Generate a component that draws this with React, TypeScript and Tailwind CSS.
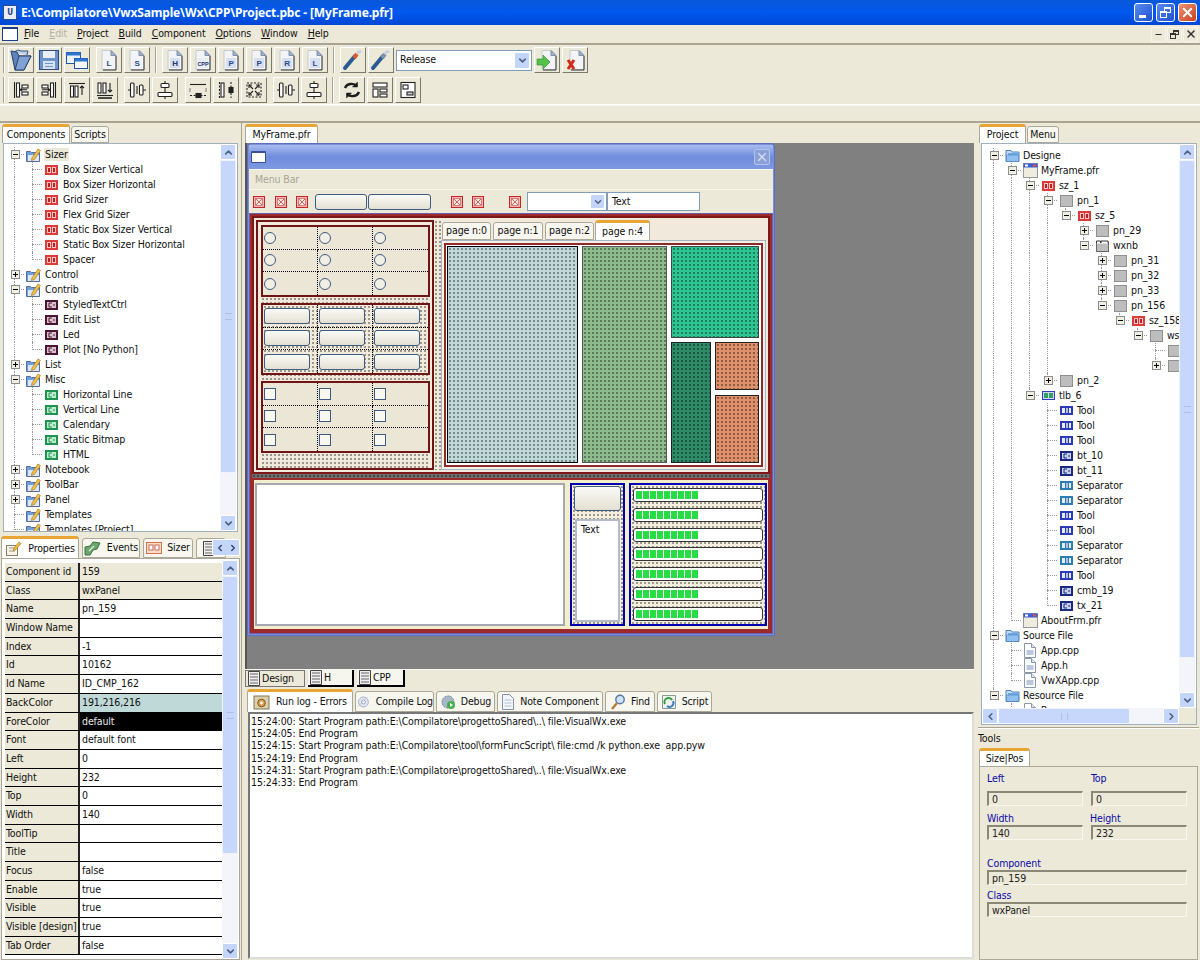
import React from "react";
import { ChevronUp, ChevronDown, ChevronLeft, ChevronRight, Minus, X } from "lucide-react";

const DOTS = "bg-[radial-gradient(circle,rgba(0,0,0,0.36)_0.75px,transparent_0.85px)] bg-[length:4px_4px]";
const BEV = "border border-t-white border-l-white border-r-[#7d7968] border-b-[#7d7968]";

/* ---------- toolbar icons ---------- */
const Doc = ({ l, c = "#2a4a90", sz = 8, tint = "#d5dff0" }: { l: string; c?: string; sz?: number; tint?: string }) => (
  <svg width="20" height="22" viewBox="0 0 20 22">
    <path d="M3 1.5h9l5 5v14H3z" fill="#f3f4f5" stroke="#c5c9cf" />
    <path d="M12 1.5v5h5z" fill="#9fb4cf" stroke="#7d8ea8" />
    <rect x="5" y="9" width="10" height="10" fill={tint} />
    <text x="10" y="17" textAnchor="middle" fontSize={sz} fontWeight="700" fontFamily="Liberation Sans" fill={c}>{l}</text>
    <path d="M17 7v14H4" fill="none" stroke="#333" />
  </svg>
);
const OpenFolder = () => (
  <svg width="24" height="24" viewBox="0 0 24 24">
    <path d="M5 4l4-2 3 1h7l-1 4" fill="#bcd0ea" stroke="#34527c" />
    <path d="M2 3l6 1 2 4h12l-7 14H6z" fill="#5f83b8" stroke="#26426c" />
    <path d="M10 8h12l-7 14H6z" fill="#7fa2d2" stroke="#26426c" />
  </svg>
);
const Floppy = () => (
  <svg width="22" height="22" viewBox="0 0 22 22">
    <rect x="1.5" y="1.5" width="19" height="19" fill="#6c93c9" stroke="#2d4d80" />
    <rect x="5" y="2" width="12" height="7" fill="#e9f0f9" />
    <rect x="5" y="12" width="12" height="8" fill="#d7e2f1" />
    <rect x="7" y="14" width="8" height="1" fill="#6c93c9" />
    <rect x="7" y="17" width="8" height="1" fill="#6c93c9" />
  </svg>
);
const Windows = () => (
  <svg width="24" height="22" viewBox="0 0 24 22">
    <rect x="1.5" y="3.5" width="14" height="11" fill="#eef3fa" stroke="#1f57a8" />
    <rect x="1.5" y="3.5" width="14" height="3" fill="#2e74d0" />
    <rect x="9.5" y="9.5" width="13" height="10" fill="#f7f9fc" stroke="#1f57a8" />
    <rect x="9.5" y="9.5" width="13" height="3" fill="#2e74d0" />
  </svg>
);
const G = ({ children }: { children: React.ReactNode }) => (
  <svg width="20" height="20" viewBox="0 0 20 20" fill="none" stroke="#222" strokeWidth="1.1">{children}</svg>
);
const AlignL = () => <G><path d="M3.5 2v16" /><rect x="5.5" y="3" width="3" height="14" fill="#fff" /><rect x="11" y="5" width="6" height="3" fill="#fff" /><rect x="11" y="12" width="6" height="3" fill="#fff" /><path d="M9 9.8h7M11 8.5l-2 1.3 2 1.3" /></G>;
const AlignR = () => <G><path d="M16.5 2v16" /><rect x="11.5" y="3" width="3" height="14" fill="#fff" /><rect x="3" y="5" width="6" height="3" fill="#fff" /><rect x="3" y="12" width="6" height="3" fill="#fff" /><path d="M3 9.8h8M9 8.5l2 1.3-2 1.3" /></G>;
const AlignT = () => <G><path d="M2 3.5h16" /><rect x="3.5" y="6" width="3" height="11" fill="#fff" /><rect x="8" y="6" width="3" height="11" fill="#fff" /><path d="M15 15V6M13 8l2-2 2 2" /></G>;
const AlignB = () => <G><path d="M2 15.5h16" /><rect x="3" y="3" width="3" height="10" fill="#fff" /><rect x="8" y="3" width="3" height="10" fill="#fff" /><path d="M15 3v9M13 10l2 2 2-2" /><path d="M3 18h14" strokeWidth="1.6" /></G>;
const CenterH = () => <G><path d="M10 6v8M1 10h3M16 10h3" /><rect x="3.5" y="3" width="3.5" height="14" rx="1" fill="#fff" /><rect x="12.5" y="5" width="3.5" height="10" rx="1" fill="#fff" /></G>;
const CenterV = () => <G><path d="M10 1v3M10 7v6M10 16v3" /><rect x="6" y="3.5" width="8" height="4" rx="1" fill="#fff" /><rect x="3" y="12.5" width="14" height="4" rx="1" fill="#fff" /></G>;
const SpaceV = () => <G><path d="M2 4.5h16" /><path d="M2 15.5h16" strokeDasharray="2 1.5" /><path d="M2 8.5v3M18 8.5v3" strokeDasharray="1 1" /><rect x="8" y="13.5" width="5" height="4" fill="#222" /></G>;
const SpaceH = () => <G><path d="M3.5 2v16" strokeDasharray="2 1.5" /><rect x="5" y="3" width="3" height="14" fill="#fff" /><path d="M15 2v5M15 13v5" strokeDasharray="2 1.5" /><rect x="13" y="7.5" width="4" height="5" fill="#222" /></G>;
const Expand = () => <G><rect x="3" y="3" width="14" height="14" strokeDasharray="2 1.5" /><path d="M5 5l4 4M15 5l-4 4M5 15l4-4M15 15l-4-4" /><path d="M5 8V5h3M15 8V5h-3M5 12v3h3M15 12v3h-3" /></G>;
const Refresh = () => (
  <svg width="20" height="20" viewBox="0 0 20 20" fill="none" stroke="#1c1c1c" strokeWidth="2.4">
    <path d="M3 8a7 6 0 0 1 12-2" /><path d="M17 12a7 6 0 0 1-12 2" />
    <path d="M15.5 2v5h-5z" fill="#1c1c1c" strokeWidth="0.5" /><path d="M4.5 18v-5h5z" fill="#1c1c1c" strokeWidth="0.5" />
  </svg>
);
const Lay1 = () => <G><rect x="3" y="3" width="14" height="4" fill="#fff" /><rect x="3" y="9" width="5" height="8" fill="#fff" /><rect x="10" y="9" width="7" height="3" fill="#fff" /><rect x="10" y="14" width="7" height="3" fill="#fff" /></G>;
const Lay2 = () => <G><rect x="3" y="2.5" width="14" height="15" fill="#fff" /><rect x="5" y="5" width="5" height="4" fill="#fff" /><rect x="9" y="12" width="6" height="3" fill="#ccc" /></G>;
const Wand = ({ hot }: { hot?: boolean }) => (
  <svg width="22" height="22" viewBox="0 0 22 22">
    <path d="M3 19L13 7" stroke="#2c5a92" strokeWidth="4" strokeLinecap="round" />
    <path d="M12 9l3-4" stroke={hot ? "#d75a33" : "#7f93b0"} strokeWidth="4" />
    <path d="M15 4l4-2" stroke="#c4cedd" strokeWidth="3" />
  </svg>
);
const DocGo = ({ x }: { x?: boolean }) => (
  <svg width="22" height="23" viewBox="0 0 22 23">
    <path d="M6 1.5h9l5 5v14H6z" fill="#f3f4f5" stroke="#c5c9cf" />
    <path d="M15 1.5v5h5z" fill="#9fb4cf" stroke="#7d8ea8" />
    <path d="M20 7v14H7" fill="none" stroke="#333" />
    {x ? (
      <path d="M4 11l6 9M10 11l-6 9" stroke="#d02a1c" strokeWidth="3" />
    ) : (
      <path d="M1 10h6V6l7 7-7 7v-4H1z" fill="#54c248" stroke="#2c8a2a" strokeWidth="0.6" />
    )}
  </svg>
);

const Btn = ({ children, className = "" }: { children: React.ReactNode; className?: string }) => (
  <div className={`w-[26px] h-[26px] flex items-center justify-center bg-[#ece9d8] shrink-0 ${BEV} ${className}`}>{children}</div>
);
const Sep = ({ className = "" }: { className?: string }) => (
  <div className={`w-[2px] h-[26px] shrink-0 border-l border-l-[#a8a491] border-r border-r-white ${className}`} />
);

/* ---------- tree ---------- */
type Ic = "fold" | "sizer" | "maroon" | "green" | "blue" | "frame" | "gray" | "nb" | "tb" | "tool" | "navy" | "sep" | "file" | "none";

const TreeIcon = ({ k }: { k: Ic }) => {
  switch (k) {
    case "fold":
      return (
        <svg width="16" height="15" viewBox="0 0 16 15">
          <path d="M1.5 4.5h4l1 1h8v9h-13z" fill="#6f9fdf" stroke="#5a6e95" />
          <path d="M3 8h11v6H3z" fill="#dce8fa" />
          <path d="M7 11l6-9 2.4 1.5-6 9-3 1z" fill="#f0c24a" stroke="#a9791c" strokeWidth="0.7" />
        </svg>
      );
    case "sizer":
      return (
        <svg width="13" height="10" viewBox="0 0 13 10">
          <rect width="13" height="10" fill="#dd3a3a" />
          <rect x="2" y="2" width="4" height="6" fill="#f7c8c8" />
          <rect x="7" y="2" width="4" height="6" fill="#f7c8c8" />
          <rect x="3" y="3" width="2" height="4" fill="#b92020" />
          <rect x="8" y="3" width="2" height="4" fill="#b92020" />
        </svg>
      );
    case "maroon":
    case "green":
    case "navy":
      return (
        <svg width="13" height="10" viewBox="0 0 13 10">
          <rect width="13" height="10" fill={k === "maroon" ? "#4a1530" : k === "green" ? "#1f9450" : "#1a2a80"} />
          <rect x="2" y="2" width="9" height="6" fill={k === "maroon" ? "#d8c2d0" : k === "green" ? "#c0ecd0" : "#c8d0f0"} />
          <path d="M7 3H4v4h3M8 5h2" stroke={k === "maroon" ? "#4a1530" : k === "green" ? "#1f9450" : "#1a2a80"} fill="none" />
        </svg>
      );
    case "blue":
      return (
        <svg width="15" height="13" viewBox="0 0 15 13">
          <path d="M1 3V1.5h5L7 3h7v9.5H1z" fill="#c2dcf6" stroke="#4c80bb" />
          <path d="M3 4h10v8H3z" fill="#6ea9e4" />
          <path d="M1.5 6h12v6.5h-12z" fill="#8fc0ef" stroke="#4c80bb" strokeWidth="0.6" />
        </svg>
      );
    case "frame":
      return (
        <svg width="15" height="15" viewBox="0 0 15 15">
          <rect x="0.5" y="0.5" width="14" height="14" fill="#eeecdf" stroke="#999" />
          <rect x="0.5" y="0.5" width="14" height="4" fill="#3b5fd0" />
          <rect x="10" y="1.5" width="3" height="2" fill="#e85050" />
          <rect x="2" y="1.5" width="3" height="2" fill="#fff" />
        </svg>
      );
    case "gray":
      return <div className="w-[13px] h-[12px] bg-[#bdbdbd] border border-[#8f8f8f]" />;
    case "nb":
      return (
        <svg width="13" height="12" viewBox="0 0 13 12">
          <rect x="0.5" y="2.5" width="12" height="9" fill="#bdbdbd" stroke="#666" />
          <rect x="1" y="0.5" width="11" height="3" fill="#fff" />
          <path d="M0.5 3V1h4v2M5 3V1h7v2" stroke="#333" fill="none" />
        </svg>
      );
    case "tb":
      return (
        <svg width="13" height="9" viewBox="0 0 13 9">
          <rect x="0.5" y="0.5" width="12" height="8" fill="#cfd8f0" stroke="#2e3ec0" />
          <rect x="2" y="2" width="4" height="5" fill="#2fa060" />
          <rect x="7" y="2" width="4" height="5" fill="#2fa060" />
        </svg>
      );
    case "tool":
    case "sep":
      return (
        <svg width="13" height="9" viewBox="0 0 13 9">
          <rect width="13" height="9" fill={k === "tool" ? "#2a3ab8" : "#2a7fb0"} />
          <rect x="2" y="2" width="3" height="5" fill="#e8ecf8" />
          <rect x="6" y="2" width="2" height="5" fill="#b0c0e8" />
          <rect x="9" y="2" width="2" height="5" fill="#e8ecf8" />
        </svg>
      );
    case "file":
      return (
        <svg width="12" height="15" viewBox="0 0 12 15">
          <path d="M0.5 0.5h7l4 4v10h-11z" fill="#fff" stroke="#8a97ab" />
          <path d="M7.5 0.5v4h4" fill="#dfe6f1" stroke="#8a97ab" />
          <rect x="2.5" y="7" width="7" height="5" fill="#b8c7de" />
        </svg>
      );
    default:
      return null;
  }
};

type Row = { l: number; t: string; i: Ic; e?: "+" | "-"; sel?: boolean };

const Tree = ({ rows, textCls = "ml-[1px]" }: { rows: Row[]; textCls?: string }) => (
  <div className="flex-1 min-w-0 overflow-hidden bg-white">
    {rows.map((r, n) => {
      const next = (lvl: number) => {
        for (let j = n + 1; j < rows.length; j++) {
          if (rows[j].l < lvl) return false;
          if (rows[j].l === lvl) return true;
        }
        return false;
      };
      return (
        <div key={n} className="flex h-[15px] items-center whitespace-nowrap">
          {Array.from({ length: r.l }).map((_, i) => (
            <div key={i} className="w-[18px] h-[15px] shrink-0 relative">
              {next(i) && <div className="absolute left-[8px] top-0 bottom-0 border-l border-dotted border-[#999]" />}
            </div>
          ))}
          <div className="w-[18px] h-[15px] shrink-0 relative flex items-center justify-center">
            <div className={`absolute left-[8px] top-0 border-l border-dotted border-[#999] ${next(r.l) ? "bottom-0" : "h-[8px]"}`} />
            <div className="absolute left-[8px] right-0 top-[7px] border-t border-dotted border-[#999]" />
            {r.e && (
              <div className="relative w-[9px] h-[9px] bg-[#f1efe2] border border-[#8c8c8c] flex items-center justify-center">
                <div className="w-[5px] h-px bg-black" />
                {r.e === "+" && <div className="absolute w-px h-[5px] bg-black" />}
              </div>
            )}
          </div>
          <div className="w-[18px] h-[15px] shrink-0 flex items-center justify-center"><TreeIcon k={r.i} /></div>
          <span className={`${textCls} text-[10.5px] leading-[13px] px-px ${r.sel ? "bg-[#ece9d8]" : ""}`}>{r.t}</span>
        </div>
      );
    })}
  </div>
);

const leftRows: Row[] = [
  { l: 0, t: "Sizer", i: "fold", e: "-", sel: true },
  ...["Box Sizer Vertical", "Box Sizer Horizontal", "Grid Sizer", "Flex Grid Sizer", "Static Box Sizer Vertical", "Static Box Sizer Horizontal", "Spacer"].map((t): Row => ({ l: 1, t, i: "sizer" })),
  { l: 0, t: "Control", i: "fold", e: "+" },
  { l: 0, t: "Contrib", i: "fold", e: "-" },
  ...["StyledTextCtrl", "Edit List", "Led", "Plot [No Python]"].map((t): Row => ({ l: 1, t, i: "maroon" })),
  { l: 0, t: "List", i: "fold", e: "+" },
  { l: 0, t: "Misc", i: "fold", e: "-" },
  ...["Horizontal Line", "Vertical Line", "Calendary", "Static Bitmap", "HTML"].map((t): Row => ({ l: 1, t, i: "green" })),
  { l: 0, t: "Notebook", i: "fold", e: "+" },
  { l: 0, t: "ToolBar", i: "fold", e: "+" },
  { l: 0, t: "Panel", i: "fold", e: "+" },
  { l: 0, t: "Templates", i: "fold" },
  { l: 0, t: "Templates [Project]", i: "fold" },
];

const rightRows: Row[] = [
  { l: 0, t: "Designe", i: "blue", e: "-" },
  { l: 1, t: "MyFrame.pfr", i: "frame", e: "-" },
  { l: 2, t: "sz_1", i: "sizer", e: "-" },
  { l: 3, t: "pn_1", i: "gray", e: "-" },
  { l: 4, t: "sz_5", i: "sizer", e: "-" },
  { l: 5, t: "pn_29", i: "gray", e: "+" },
  { l: 5, t: "wxnb", i: "nb", e: "-" },
  { l: 6, t: "pn_31", i: "gray", e: "+" },
  { l: 6, t: "pn_32", i: "gray", e: "+" },
  { l: 6, t: "pn_33", i: "gray", e: "+" },
  { l: 6, t: "pn_156", i: "gray", e: "-" },
  { l: 7, t: "sz_158", i: "sizer", e: "-" },
  { l: 8, t: "ws", i: "gray", e: "-" },
  { l: 9, t: "", i: "gray" },
  { l: 9, t: "", i: "gray", e: "+" },
  { l: 3, t: "pn_2", i: "gray", e: "+" },
  { l: 2, t: "tlb_6", i: "tb", e: "-" },
  ...(["Tool", "Tool", "Tool"].map((t): Row => ({ l: 3, t, i: "tool" }))),
  { l: 3, t: "bt_10", i: "navy" },
  { l: 3, t: "bt_11", i: "navy" },
  { l: 3, t: "Separator", i: "sep" },
  { l: 3, t: "Separator", i: "sep" },
  { l: 3, t: "Tool", i: "tool" },
  { l: 3, t: "Tool", i: "tool" },
  { l: 3, t: "Separator", i: "sep" },
  { l: 3, t: "Separator", i: "sep" },
  { l: 3, t: "Tool", i: "tool" },
  { l: 3, t: "cmb_19", i: "navy" },
  { l: 3, t: "tx_21", i: "navy" },
  { l: 1, t: "AboutFrm.pfr", i: "frame" },
  { l: 0, t: "Source File", i: "blue", e: "-" },
  { l: 1, t: "App.cpp", i: "file" },
  { l: 1, t: "App.h", i: "file" },
  { l: 1, t: "VwXApp.cpp", i: "file" },
  { l: 0, t: "Resource File", i: "blue", e: "-" },
  { l: 1, t: "Resource.rc", i: "file" },
];

/* ---------- scrollbars ---------- */
const SBtn = ({ children, className = "" }: { children: React.ReactNode; className?: string }) => (
  <div className={`flex items-center justify-center bg-[#c3d5f9] border border-white rounded-[2px] text-[#4d6185] shrink-0 ${className}`}>{children}</div>
);
const VScroll = ({ thumb }: { thumb: string }) => (
  <div className="w-[16px] shrink-0 bg-[#f3f5fb] flex flex-col h-full">
    <SBtn className="h-[16px]"><ChevronUp size={11} strokeWidth={3.5} /></SBtn>
    <div className={`${thumb} bg-[#c6d7fb] border border-[#eef3fe] rounded-[2px] flex items-center justify-center shrink-0`}>
      <div className="w-[7px] h-[7px] border-y border-[#aebfe6]" />
    </div>
    <div className="flex-1" />
    <SBtn className="h-[16px]"><ChevronDown size={11} strokeWidth={3.5} /></SBtn>
  </div>
);

/* ---------- tabs ---------- */
const TabIc = ({ k }: { k: string }) => {
  if (k === "prop") return (<svg width="18" height="16" viewBox="0 0 18 16"><rect x="1.5" y="4.5" width="11" height="10" fill="#f7f3e8" stroke="#8a7f6a" /><path d="M4 7h6M4 10h6" stroke="#a09580" /><path d="M9 7l5-6 2 1.6-5 6-3 1z" fill="#f0b93c" stroke="#a8761a" strokeWidth="0.6" /></svg>);
  if (k === "ev") return (<svg width="18" height="16" viewBox="0 0 18 16"><path d="M1 15V7l5-1 3-4 7 1-3 6-4 1-3 5z" fill="#6aa56a" stroke="#3e6e45" /><path d="M5 11l5-5" stroke="#d9ecd9" strokeWidth="1.4" /></svg>);
  if (k === "sz") return (<svg width="16" height="12" viewBox="0 0 16 12"><rect x="0.5" y="0.5" width="15" height="11" fill="#f7dcc8" stroke="#d9704a" /><rect x="3" y="3" width="4" height="5" fill="#fff" stroke="#cc6a5a" /><rect x="9" y="3" width="4" height="5" fill="#fff" stroke="#cc6a5a" /></svg>);
  if (k === "doc") return (<svg width="12" height="15" viewBox="0 0 12 15"><path d="M0.5 0.5h11v14h-11z" fill="#eee" stroke="#444" /><path d="M2 3h8M2 6h8M2 9h8M2 12h8" stroke="#666" /></svg>);
  if (k === "run") return (<svg width="18" height="16" viewBox="0 0 18 16"><rect x="1" y="2" width="15" height="13" fill="#d8d0ae" stroke="#807755" /><circle cx="8.5" cy="9" r="3.8" fill="#e09b4a" stroke="#7d5a22" /><circle cx="8.5" cy="9" r="1.4" fill="#fff" /></svg>);
  if (k === "cmp") return (<svg width="18" height="16" viewBox="0 0 18 16"><circle cx="9" cy="8" r="6" fill="#e6e8f0" stroke="#9aa4c0" /><circle cx="9" cy="8" r="2.4" fill="#fff" stroke="#8a94b4" /><path d="M2 14L14 2" stroke="#b6bfd8" /></svg>);
  if (k === "dbg") return (<svg width="16" height="16" viewBox="0 0 16 16"><circle cx="8" cy="8" r="6" fill="#aab7c7" stroke="#6c7c90" strokeDasharray="2 1" /><circle cx="11" cy="11" r="4" fill="#46b050" /><path d="M10 9l3 2-3 2z" fill="#fff" /></svg>);
  if (k === "note") return (<svg width="14" height="16" viewBox="0 0 14 16"><path d="M1.5 0.5h7l4 4v11h-11z" fill="#f3f6fb" stroke="#8294ad" /><path d="M3.5 6h7M3.5 9h7M3.5 12h7" stroke="#b2c2d8" /></svg>);
  if (k === "find") return (<svg width="16" height="16" viewBox="0 0 16 16"><circle cx="10" cy="5.5" r="4.2" fill="#cfe3fa" stroke="#577a9e" strokeWidth="1.4" /><path d="M7 9l-5 6" stroke="#b67a3a" strokeWidth="2.4" /></svg>);
  if (k === "scr") return (<svg width="16" height="16" viewBox="0 0 16 16"><path d="M1.5 1.5h13v13h-13z" fill="#eef3f0" stroke="#8a9a90" /><path d="M4 10a4 4 0 0 1 7-4" stroke="#2a9e3c" strokeWidth="2" fill="none" /><path d="M12 7a4 4 0 0 1-6 5" stroke="#3e7ec0" strokeWidth="2" fill="none" /></svg>);
  return null;
};

const Tab = ({ on, label, ic, w, gap = "gap-[5px]" }: { on?: boolean; label: string; ic?: string; w: string; gap?: string }) => (
  <div
    className={`${w} shrink-0 flex items-center justify-center ${gap} text-[10.5px] whitespace-nowrap border-x border-[#aca899] rounded-t-[3px] ${
      on ? "h-full bg-white border-t-[3px] border-t-[#e7a535] relative z-10" : "h-[calc(100%-2px)] bg-[#f7f6ef] border-t border-t-[#aca899] border-b border-b-[#aca899] self-end"
    }`}
  >
    {ic && <TabIc k={ic} />}
    <span>{label}</span>
  </div>
);

/* ---------- designer bits ---------- */
const XIcon = ({ className = "" }: { className?: string }) => (
  <svg width="12" height="12" viewBox="0 0 12 12" className={`shrink-0 ${className}`}>
    <rect x="0.5" y="0.5" width="11" height="11" fill="#f0b8b8" stroke="#cc2222" />
    <rect x="2.5" y="2.5" width="7" height="7" fill="#f3e5d8" stroke="#c86060" strokeWidth="0.7" />
    <path d="M3 3l6 6M9 3l-6 6" stroke="#c04848" strokeWidth="0.8" />
  </svg>
);
const XPBtn = ({ className = "" }: { className?: string }) => (
  <div className={`rounded-[3px] border border-[#3d5d80] bg-gradient-to-b from-[#fafaf7] to-[#e3e0d2] ${className}`} />
);

const grid9 = [0, 1, 2, 3, 4, 5, 6, 7, 8];
const CELL = (i: number) =>
  `flex items-center pl-[1px] ${i % 3 !== 2 ? "border-r border-dotted border-r-black" : ""} ${i < 6 ? "border-b border-dotted border-b-black" : ""}`;

const Group = ({ kind, className }: { kind: "radio" | "btn" | "check"; className: string }) => (
  <div className={`h-[72px] shrink-0 border-2 border-[#701515] grid grid-cols-3 grid-rows-3 ${className}`}>
    {grid9.map((i) => (
      <div key={i} className={CELL(i)}>
        {kind === "radio" && <div className="w-[12px] h-[12px] rounded-full border border-[#3d5d80] bg-[#f1efe6]" />}
        {kind === "check" && <div className="w-[12px] h-[12px] border border-[#3d5d80] bg-[#f8f7f0]" />}
        {kind === "btn" && <XPBtn className="w-[46px] h-[16px]" />}
      </div>
    ))}
  </div>
);

const Gauge = () => (
  <div className="h-[14px] shrink-0 rounded-[3px] border border-[#333] bg-white flex items-center pl-[2px] gap-px">
    {[0, 1, 2, 3, 4, 5, 6, 7, 8].map((i) => (
      <div key={i} className="w-[6px] h-[8px] bg-[#28dc46]" />
    ))}
  </div>
);

const Frame = () => (
  <div className="w-[528px] h-[493px] shrink-0 flex flex-col bg-[#7d8fd8] border border-[#5a6fc0] rounded-t-[4px] p-px">
    <div className="h-[24px] shrink-0 flex items-center justify-between bg-gradient-to-b from-[#a8bcee] via-[#6f8cdc] to-[#7f99e2] pl-[2px] pr-[1px]">
      <div className="w-[15px] h-[12px] bg-white border border-[#37519c] border-t-2 rounded-[1px]" />
      <X size={16} strokeWidth={2.2} className="text-[#d6def5] mr-[2px] bg-[#8b9fd8] border border-[#b6c4ea] rounded-[2px]" />
    </div>
    <div className="h-[21px] shrink-0 flex items-center bg-[#ece9d8] border-y border-y-[#f8f7f0] pl-[6px] text-[10.5px] text-[#a8a699]">Menu Bar</div>
    <div className="h-[23px] shrink-0 flex items-center bg-[#ece9d8] pl-[4px]">
      <XIcon />
      <XIcon className="ml-[10px]" />
      <XIcon className="ml-[9px]" />
      <XPBtn className="w-[52px] h-[16px] ml-[7px]" />
      <XPBtn className="w-[63px] h-[16px] ml-[1px]" />
      <XIcon className="ml-[20px]" />
      <XIcon className="ml-[9px]" />
      <XIcon className="ml-[25px]" />
      <div className="ml-[6px] w-[80px] h-[19px] bg-white border border-[#7f9db9] flex justify-end p-px">
        <SBtn className="w-[15px]"><ChevronDown size={10} strokeWidth={3.5} /></SBtn>
      </div>
      <div className="w-[93px] h-[19px] bg-white border border-[#7f9db9] text-[10.5px] pl-[4px] leading-[17px]">Text</div>
    </div>

    <div className="flex-1 min-h-0 border border-[#6a5fb0]">
      <div className="h-full border-2 border-[#9c2a2a] flex flex-col bg-[#6d6d6d]">
        {/* upper part */}
        <div className="h-[258px] shrink-0 border-2 border-[#7c1818] bg-[#f0e9dc] flex p-[2px]">
          <div className="w-[178px] shrink-0 border-2 border-[#701515] bg-[#f0e9dc] flex flex-col pl-[3px] pr-[2px] pt-[3px]">
            <div className={`flex-1 flex flex-col ${DOTS}`}>
              <Group kind="radio" className="bg-[#ece6d6]" />
              <div className="h-[6px]" />
              <Group kind="btn" className={`bg-[#f2ebdc] ${DOTS}`} />
              <div className="h-[6px]" />
              <Group kind="check" className="bg-[#ece6d6]" />
            </div>
          </div>
          <div className={`w-[7px] shrink-0 ${DOTS}`} />
          <div className="flex-1 min-w-0 flex flex-col">
            <div className="h-[20px] shrink-0 flex items-end pl-px">
              <Tab label="page n:0" w="w-[49px]" />
              <Tab label="page n:1" w="w-[50px] ml-[2px]" />
              <Tab label="page n:2" w="w-[49px] ml-[2px]" />
              <Tab on label="page n:4" w="w-[55px] ml-px" />
            </div>
            <div className="flex-1 min-h-0 border border-[#a5b6c8] bg-[#f4f0e4] p-[2px]">
              <div className="h-full border-2 border-[#8e2a2a] bg-white p-[1px] flex gap-[3px] pb-[2px]">
                <div className={`w-[131px] shrink-0 bg-[#bfd8d8] border border-black ${DOTS}`} />
                <div className={`w-[85px] shrink-0 bg-[#8fbc8f] border border-[#555] ml-px ${DOTS}`} />
                <div className="flex-1 min-w-0 flex flex-col gap-[4px] ml-px mr-[1px]">
                  <div className={`h-[92px] shrink-0 bg-[#2fc592] border border-[#444] ${DOTS}`} />
                  <div className="flex-1 min-h-0 flex gap-[4px]">
                    <div className={`w-[40px] shrink-0 bg-[#2e8b68] border border-[#222] ${DOTS}`} />
                    <div className="flex-1 min-w-0 flex flex-col gap-[5px]">
                      <div className={`h-[48px] shrink-0 bg-[#e0906a] border border-[#222] ${DOTS}`} />
                      <div className={`flex-1 min-h-0 bg-[#e0906a] border border-[#222] ${DOTS}`} />
                    </div>
                  </div>
                </div>
              </div>
            </div>
          </div>
        </div>
        {/* gutter */}
        <div className={`h-[4px] shrink-0 ${DOTS}`} />
        {/* lower part */}
        <div className="flex-1 min-h-0 border-2 border-[#9c2a2a] bg-[#f2eecb] flex pt-[3px] pl-[1px] pr-px pb-[3px]">
          <div className="w-[310px] shrink-0 bg-white border-2 border-[#a4a8b0]" />
          <div className={`w-[55px] ml-[5px] shrink-0 border-2 border-[#0000b0] flex flex-col items-center bg-[#f3efdc] pt-[1px] gap-[8px] ${DOTS}`}>
            <XPBtn className="w-[47px] h-[25px] shrink-0" />
            <div className="w-[45px] flex-1 min-h-0 mb-[2px] bg-white border-2 border-[#b4bccc] text-[10.5px] pl-[4px] pt-[1px]">Text</div>
          </div>
          <div className={`flex-1 min-w-0 ml-[4px] border-2 border-[#0000b0] bg-[#f3efdc] flex flex-col justify-around px-[2px] ${DOTS}`}>
            {[0, 1, 2, 3, 4, 5, 6].map((i) => <Gauge key={i} />)}
          </div>
        </div>
      </div>
    </div>
  </div>
);

/* ---------- property table ---------- */
const props: [string, string, string?][] = [
  ["Component id", "159", "b"], ["Class", "wxPanel", "b"], ["Name", "pn_159"], ["Window Name", ""], ["Index", "-1"], ["Id", "10162"], ["Id Name", "ID_CMP_162"],
  ["BackColor", "191,216,216", "t"], ["ForeColor", "default", "k"], ["Font", "default font"], ["Left", "0"], ["Height", "232"], ["Top", "0"], ["Width", "140"],
  ["ToolTip", ""], ["Title", ""], ["Focus", "false"], ["Enable", "true"], ["Visible", "true"], ["Visible [design]", "true"], ["Tab Order", "false"],
];
const valCls: Record<string, string> = { b: "bg-[#ece9d8]", t: "bg-[#bfd8d8]", k: "bg-black text-[#e8e8e8]" };

const Field = ({ v, className }: { v: string; className: string }) => (
  <div className={`h-[15px] shrink-0 bg-[#ece9d8] border-t-2 border-l-2 border-t-[#8b8878] border-l-[#8b8878] border-b border-r border-b-[#f8f7f0] border-r-[#f8f7f0] text-[10.5px] leading-[13px] pl-[3px] text-[#222] ${className}`}>{v}</div>
);
const Lbl = ({ t, className = "" }: { t: string; className?: string }) => (
  <div className={`text-[10.5px] leading-[13px] text-[#0a0aa8] ${className}`}>{t}</div>
);

const MBtn = ({ children }: { children: React.ReactNode }) => (
  <div className="w-[15px] h-[15px] flex items-center justify-center border border-[#f6f4ea] text-[#333]">{children}</div>
);

export default function App() {
  return (
    <div className="w-[1200px] h-[960px] overflow-hidden bg-[#ece9d8] flex flex-col font-['DejaVu_Sans_Condensed','DejaVu_Sans',sans-serif] tracking-[-0.12px] text-[#111]">
      {/* title bar */}
      <div className="h-[25px] shrink-0 flex items-center bg-gradient-to-b from-[#0a58d8] via-[#0058ee] to-[#0046d4] pl-[3px] pr-[3px] relative">
        <div className="w-[14px] h-[15px] bg-[#e8eef8] border border-[#2b4b8c] flex items-center justify-center text-[8px] font-bold text-[#1c3c80] leading-none">U</div>
        <div className="ml-[4px] text-white font-bold text-[12px] tracking-[-0.15px] whitespace-nowrap font-['Noto_Sans',sans-serif]">E:\Compilatore\VwxSample\Wx\CPP\Project.pbc - [MyFrame.pfr]</div>
        <div className="ml-auto flex gap-[3px]">
          <div className="w-[19px] h-[19px] rounded-[3px] border border-white bg-gradient-to-br from-[#5b8cf0] to-[#1c4fd0] flex items-end pl-[4px] pb-[3px]"><div className="w-[7px] h-[3px] bg-white" /></div>
          <div className="w-[19px] h-[19px] rounded-[3px] border border-white bg-gradient-to-br from-[#5b8cf0] to-[#1c4fd0] relative">
            <div className="absolute left-[7px] top-[3px] w-[7px] h-[6px] border border-white border-t-2" />
            <div className="absolute left-[3px] top-[7px] w-[7px] h-[7px] border border-white border-t-2 bg-[#3a6ce0]" />
          </div>
          <div className="w-[19px] h-[19px] rounded-[3px] border border-white bg-gradient-to-br from-[#ec9072] to-[#c9401c] flex items-center justify-center text-white"><X size={15} strokeWidth={3} /></div>
        </div>
      </div>

      {/* menu bar */}
      <div className="h-[20px] shrink-0 flex items-center border-b-2 border-b-[#a8a491] pl-[2px] text-[10.5px]">
        <div className="w-[16px] h-[14px] bg-white border border-[#1a3c8c] border-t-2 shrink-0" />
        <div className="flex gap-[10px] ml-[6px]">
          <span><u>F</u>ile</span>
          <span className="text-[#b5b2a4]"><u>E</u>dit</span>
          <span><u>P</u>roject</span>
          <span><u>B</u>uild</span>
          <span><u>C</u>omponent</span>
          <span><u>O</u>ptions</span>
          <span><u>W</u>indow</span>
          <span><u>H</u>elp</span>
        </div>
        <div className="ml-auto flex gap-px mr-[2px]">
          <MBtn><Minus size={9} strokeWidth={3} /></MBtn>
          <MBtn><div className="relative w-[9px] h-[9px]"><div className="absolute right-0 top-0 w-[6px] h-[5px] border border-[#333] border-t-2" /><div className="absolute left-0 bottom-0 w-[6px] h-[6px] border border-[#333] border-t-2 bg-[#ece9d8]" /></div></MBtn>
          <MBtn><X size={12} strokeWidth={3} /></MBtn>
        </div>
      </div>

      {/* toolbars */}
      <div className="h-[60px] shrink-0 flex flex-col gap-[4px] pt-[2px] border-b border-b-white">
        <div className="flex h-[26px] items-center gap-[2px] pl-[3px]">
          <Sep className="mr-[1px]" />
          <Btn><OpenFolder /></Btn>
          <Btn><Floppy /></Btn>
          <Btn><Windows /></Btn>
          <Btn className="ml-[4px]"><Doc l="L" tint="#f0f2f5" /></Btn>
          <Btn><Doc l="S" tint="#f0f2f5" /></Btn>
          <Sep className="ml-[3px] mr-[3px]" />
          <Btn><Doc l="H" c="#1d3568" /></Btn>
          <Btn><Doc l="CPP" sz={5.5} c="#1d3568" tint="#e8edf5" /></Btn>
          <Btn><Doc l="P" /></Btn>
          <Btn><Doc l="P" /></Btn>
          <Btn><Doc l="R" /></Btn>
          <Btn><Doc l="L" /></Btn>
          <Sep className="ml-[3px] mr-[3px]" />
          <Btn><Wand hot /></Btn>
          <Btn><Wand /></Btn>
          <div className="w-[136px] h-[21px] bg-white border border-[#7f9db9] flex items-center justify-between pl-[3px] pr-px text-[10.5px] shrink-0 py-px">
            <span>Release</span>
            <SBtn className="w-[16px] h-full"><ChevronDown size={11} strokeWidth={3.5} /></SBtn>
          </div>
          <Btn><DocGo /></Btn>
          <Btn><DocGo x /></Btn>
        </div>
        <div className="flex h-[26px] items-center gap-[2px] pl-[3px]">
          <Sep className="mr-[1px]" />
          <Btn><AlignL /></Btn>
          <Btn><AlignR /></Btn>
          <Btn><AlignT /></Btn>
          <Btn><AlignB /></Btn>
          <Btn className="ml-[4px]"><CenterH /></Btn>
          <Btn><CenterV /></Btn>
          <Btn className="ml-[5px]"><SpaceV /></Btn>
          <Btn><SpaceH /></Btn>
          <Btn><Expand /></Btn>
          <Btn className="ml-[4px]"><CenterH /></Btn>
          <Btn><CenterV /></Btn>
          <Sep className="ml-[3px] mr-[3px]" />
          <Btn><Refresh /></Btn>
          <Btn><Lay1 /></Btn>
          <Btn><Lay2 /></Btn>
        </div>
      </div>
      <div className="h-[18px] shrink-0 border-t border-t-[#f8f7ef] border-b-2 border-b-[#a8a491]" />

      {/* main */}
      <div className="flex-1 min-h-0 flex">
        {/* left */}
        <div className="w-[242px] shrink-0 flex flex-col border-r border-r-[#a8a491] pt-[1px]">
          <div className="h-[19px] shrink-0 flex items-end pl-[2px] gap-px">
            <Tab on label="Components" w="w-[68px]" />
            <Tab label="Scripts" w="w-[38px]" />
          </div>
          <div className="h-[389px] shrink-0 mx-[3px] border border-[#9fb0c0] bg-white flex pl-[2px] pr-[1px]">
            <div className="flex-1 min-w-0 pt-[3px] overflow-hidden flex"><Tree rows={leftRows} textCls="ml-[2px]" /></div>
            <VScroll thumb="h-[313px]" />
          </div>
          <div className="h-[22px] shrink-0 mt-[4px] flex items-end pl-[1px] gap-[3px] relative">
            <Tab on label="Properties" ic="prop" w="w-[78px]" />
            <Tab label="Events" ic="ev" w="w-[58px]" />
            <Tab label="Sizer" ic="sz" w="w-[50px]" />
            <Tab label="" ic="doc" w="w-[30px]" />
            <div className="absolute right-[1px] bottom-[2px] w-[28px] h-[17px] rounded-[2px] bg-[#c3d5f9] border border-white flex items-center justify-center gap-[3px] text-[#33476b] z-20">
              <ChevronLeft size={10} strokeWidth={3.5} />
              <ChevronRight size={10} strokeWidth={3.5} />
            </div>
          </div>
          <div className="flex-1 min-h-0 mx-[1px] border border-[#aca899] bg-white flex pl-[3px] pt-[1px] pr-px">
            <div className="flex-1 min-w-0 flex flex-col pt-[3px]">
              {props.map(([k, v, c]) => (
                <div key={k} className="h-[18.7px] shrink-0 flex border-b border-b-black text-[10.5px] leading-[17px]">
                  <div className="w-[75px] shrink-0 bg-[#ece9d8] border-r-2 border-r-[#222] pl-[1px] whitespace-nowrap overflow-hidden">{k}</div>
                  <div className={`flex-1 pl-[2px] ${c ? valCls[c] : "bg-white"}`}>{v}</div>
                </div>
              ))}
            </div>
            <VScroll thumb="h-[278px]" />
          </div>
        </div>

        {/* centre */}
        <div className="w-[729px] shrink-0 ml-[3px] flex flex-col pt-[1px]">
          <div className="h-[19px] shrink-0 flex items-end">
            <Tab on label="MyFrame.pfr" w="w-[73px]" />
          </div>
          <div className="h-[526px] shrink-0 bg-[#808080] border-l-2 border-l-[#555] overflow-hidden">
            <Frame />
          </div>
          <div className="h-[18px] shrink-0 flex text-[10.5px] border-t border-t-[#f8f7ef]">
            <div className="w-[60px] flex items-center gap-[2px] pl-[2px] bg-[#ece9d8] border border-[#777]"><TabIc k="doc" /><span>Design</span></div>
            <div className="w-[46px] ml-[3px] flex items-center gap-[2px] pl-[2px] bg-[#f6f5ee] border-r-2 border-b-2 border-black"><TabIc k="doc" /><span>H</span></div>
            <div className="w-[48px] ml-[3px] flex items-center gap-[2px] pl-[2px] bg-[#f6f5ee] border-r-2 border-b-2 border-black"><TabIc k="doc" /><span>CPP</span></div>
          </div>
          <div className="h-[23px] shrink-0 mt-[2px] flex items-end pl-[2px] gap-[2px]">
            <Tab on label="Run log - Errors" ic="run" w="w-[106px]" />
            <Tab label="Compile Log" ic="cmp" w="w-[79px]" />
            <Tab label="Debug" ic="dbg" w="w-[59px]" />
            <Tab label="Note Component" ic="note" w="w-[106px]" />
            <Tab label="Find" ic="find" w="w-[50px]" />
            <Tab label="Script" ic="scr" w="w-[55px]" />
          </div>
          <div className="h-[247px] shrink-0 ml-[3px] bg-white border-2 border-t-[#777] border-l-[#777] border-r-[#ddd] border-b-[#ddd] pl-[1px] pt-[1px] text-[10.5px] leading-[12.2px] whitespace-nowrap">
            <div>15:24:00: Start Program path:E:\Compilatore\progettoShared\..\ file:VisualWx.exe</div>
            <div>15:24:05: End Program</div>
            <div>15:24:15: Start Program path:E:\Compilatore\tool\formFuncScript\ file:cmd /k python.exe&nbsp; app.pyw</div>
            <div>15:24:19: End Program</div>
            <div>15:24:31: Start Program path:E:\Compilatore\progettoShared\..\ file:VisualWx.exe</div>
            <div>15:24:33: End Program</div>
          </div>
        </div>

        {/* right */}
        <div className="flex-1 min-w-0 ml-[3px] flex flex-col pt-[1px]">
          <div className="h-[19px] shrink-0 flex items-end pl-[2px] gap-px">
            <Tab on label="Project" w="w-[47px]" />
            <Tab label="Menu" w="w-[32px]" />
          </div>
          <div className="h-[582px] shrink-0 ml-[4px] mr-[3px] border border-[#9fb0c0] bg-white flex flex-col">
            <div className="flex-1 min-h-0 flex pl-[3px] pr-px overflow-hidden">
              <div className="flex-1 min-w-0 pt-[4px] overflow-hidden flex"><Tree rows={rightRows} /></div>
              <VScroll thumb="h-[498px]" />
            </div>
            <div className="h-[16px] shrink-0 flex bg-[#f3f5fb]">
              <SBtn className="w-[16px]"><ChevronLeft size={11} strokeWidth={3.5} /></SBtn>
              <div className="w-[132px] bg-[#c6d7fb] border border-[#eef3fe] rounded-[2px] flex items-center justify-center"><div className="w-[7px] h-[7px] border-x border-[#aebfe6]" /></div>
              <div className="flex-1" />
              <SBtn className="w-[16px]"><ChevronRight size={11} strokeWidth={3.5} /></SBtn>
              <div className="w-[17px] bg-[#ece9d8]" />
            </div>
          </div>
          <div className="h-[2px] mt-[2px] mx-px shrink-0 border-t border-t-[#a8a491] border-b border-b-white" />
          <div className="text-[10.5px] leading-[13px] mt-[3px] ml-[1px]">Tools</div>
          <div className="h-[18px] shrink-0 mt-[3px] flex items-end pl-[2px]">
            <Tab on label="Size|Pos" w="w-[51px]" />
          </div>
          <div className="flex-1 min-h-0 ml-[2px] mr-[2px] border border-[#aca899] pl-[7px] pr-[8px] pt-[5px]">
            <div className="flex gap-[8px]">
              <Lbl t="Left" className="w-[96px]" />
              <Lbl t="Top" />
            </div>
            <div className="flex gap-[8px] mt-[6px]">
              <Field v="0" className="w-[96px]" />
              <Field v="0" className="w-[96px]" />
            </div>
            <div className="flex gap-[7px] mt-[6px]">
              <Lbl t="Width" className="w-[96px]" />
              <Lbl t="Height" />
            </div>
            <div className="flex gap-[8px]">
              <Field v="140" className="w-[96px]" />
              <Field v="232" className="w-[96px]" />
            </div>
            <Lbl t="Component" className="mt-[17px]" />
            <Field v="pn_159" className="w-[200px]" />
            <Lbl t="Class" className="mt-[4px]" />
            <Field v="wxPanel" className="w-[200px]" />
          </div>
        </div>
      </div>
    </div>
  );
}
